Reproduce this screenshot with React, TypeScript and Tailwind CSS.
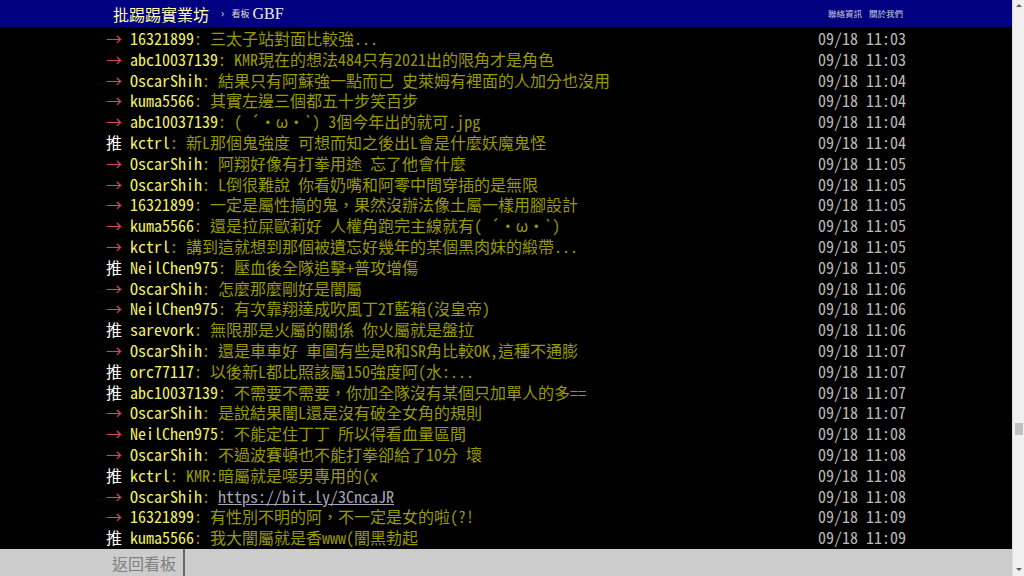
import React from 'react';

type Push = { tag: '推' | '→'; user: string; text: string; time: string; link?: boolean };

const pushes: Push[] = [
  { tag: '→', user: '16321899', text: '三太子站對面比較強...', time: '09/18 11:03' },
  { tag: '→', user: 'abc10037139', text: 'KMR現在的想法484只有2021出的限角才是角色', time: '09/18 11:03' },
  { tag: '→', user: 'OscarShih', text: '結果只有阿蘇強一點而已 史萊姆有裡面的人加分也沒用', time: '09/18 11:04' },
  { tag: '→', user: 'kuma5566', text: '其實左邊三個都五十步笑百步', time: '09/18 11:04' },
  { tag: '→', user: 'abc10037139', text: '( ´・ω・`) 3個今年出的就可.jpg', time: '09/18 11:04' },
  { tag: '推', user: 'kctrl', text: '新L那個鬼強度 可想而知之後出L會是什麼妖魔鬼怪', time: '09/18 11:04' },
  { tag: '→', user: 'OscarShih', text: '阿翔好像有打拳用途 忘了他會什麼', time: '09/18 11:05' },
  { tag: '→', user: 'OscarShih', text: 'L倒很難說 你看奶嘴和阿零中間穿插的是無限', time: '09/18 11:05' },
  { tag: '→', user: '16321899', text: '一定是屬性搞的鬼，果然沒辦法像土屬一樣用腳設計', time: '09/18 11:05' },
  { tag: '→', user: 'kuma5566', text: '還是拉屎歐莉好 人權角跑完主線就有( ´・ω・`)', time: '09/18 11:05' },
  { tag: '→', user: 'kctrl', text: '講到這就想到那個被遺忘好幾年的某個黑肉妹的緞帶...', time: '09/18 11:05' },
  { tag: '推', user: 'NeilChen975', text: '壓血後全隊追擊+普攻增傷', time: '09/18 11:05' },
  { tag: '→', user: 'OscarShih', text: '怎麼那麼剛好是闇屬', time: '09/18 11:06' },
  { tag: '→', user: 'NeilChen975', text: '有次靠翔達成吹風丁2T藍箱(沒皇帝)', time: '09/18 11:06' },
  { tag: '推', user: 'sarevork', text: '無限那是火屬的關係 你火屬就是盤拉', time: '09/18 11:06' },
  { tag: '→', user: 'OscarShih', text: '還是車車好 車圖有些是R和SR角比較OK,這種不通膨', time: '09/18 11:07' },
  { tag: '推', user: 'orc77117', text: '以後新L都比照該屬150強度阿(水:...', time: '09/18 11:07' },
  { tag: '推', user: 'abc10037139', text: '不需要不需要，你加全隊沒有某個只加單人的多==', time: '09/18 11:07' },
  { tag: '→', user: 'OscarShih', text: '是說結果闇L還是沒有破全女角的規則', time: '09/18 11:07' },
  { tag: '→', user: 'NeilChen975', text: '不能定住丁丁 所以得看血量區間', time: '09/18 11:08' },
  { tag: '→', user: 'OscarShih', text: '不過波賽頓也不能打拳卻給了10分 壞', time: '09/18 11:08' },
  { tag: '推', user: 'kctrl', text: 'KMR:暗屬就是噁男專用的(x', time: '09/18 11:08' },
  { tag: '→', user: 'OscarShih', text: 'https://bit.ly/3CncaJR', time: '09/18 11:08', link: true },
  { tag: '→', user: '16321899', text: '有性別不明的阿，不一定是女的啦(?!', time: '09/18 11:09' },
  { tag: '推', user: 'kuma5566', text: '我大闇屬就是香www(闇黑勃起', time: '09/18 11:09' },
];

const mono = "font-['Noto_Sans_Mono_CJK_TC','Liberation_Mono',monospace]";

const PushRow = ({ p }: { p: Push }) => (
  <div className="flex h-[20.8px] items-center whitespace-pre text-[16px] leading-[20.8px]">
    <span className={p.tag === '推' ? 'text-white' : 'text-[#d24a55]'}>{p.tag} </span>
    <span className="text-[#f2f266]">{p.user}</span>
    <span className="text-[#999900]">: </span>
    {p.link ? (
      <a className="text-[#a6a6b8] underline">{p.text}</a>
    ) : (
      <span className="text-[#999900]">{p.text}</span>
    )}
    <span className="ml-auto text-[#bbbbbb]">{p.time}</span>
  </div>
);

export default function App() {
  return (
    <div className="flex h-[576px] w-[1024px] overflow-hidden bg-black">
      <div className="flex min-w-0 flex-1 flex-col">
        <div className="flex h-[27px] shrink-0 justify-center bg-[#000080]">
          <div className="flex w-[800px] items-center pl-[7px]">
            <span className="font-['Noto_Sans_CJK_TC',sans-serif] text-[16px] text-[#ffffa8]">批踢踢實業坊</span>
            <span className="ml-[12px] text-[11px] text-[#bbbbbb]">›</span>
            <span className="ml-[7px] font-['Noto_Sans_CJK_TC',sans-serif] text-[9px] text-[#dddddd]">看板</span>
            <span className="ml-[3px] font-['Liberation_Serif',serif] text-[16px] text-[#eeeeee]">GBF</span>
            <div className="ml-auto flex gap-[7px] pr-[3px] font-['Noto_Sans_CJK_TC',sans-serif] text-[8.5px] text-[#ccccdd]">
              <span>聯絡資訊</span>
              <span>關於我們</span>
            </div>
          </div>
        </div>
        <div className="flex min-h-0 flex-1 justify-center overflow-hidden">
          <div className={`flex w-[800px] flex-col justify-end pb-[1px] ${mono}`}>
            {pushes.map((p, i) => (
              <PushRow key={i} p={p} />
            ))}
          </div>
        </div>
        <div className="flex h-[27px] shrink-0 justify-center bg-[#cccccc]">
          <div className="flex w-[800px]">
            <div className="flex w-[79px] items-center justify-end border-r-2 border-[#666666] pr-[7px] font-['Noto_Sans_CJK_TC',sans-serif] text-[16px] text-[#808080]">
              返回看板
            </div>
          </div>
        </div>
      </div>
      <div className="flex w-[12px] shrink-0 flex-col items-center border-l border-[#dddddd] bg-[#f0f0f0]">
        <div className="mt-[4px] h-0 w-0 border-x-[3px] border-b-[3px] border-x-transparent border-b-[#606060]" />
        <div className="h-[416px]" />
        <div className="h-[12px] w-[8px] bg-[#c1c1c1]" />
        <div className="flex-1" />
        <div className="mb-[5px] h-0 w-0 border-x-[3px] border-t-[3px] border-x-transparent border-t-[#606060]" />
      </div>
    </div>
  );
}
